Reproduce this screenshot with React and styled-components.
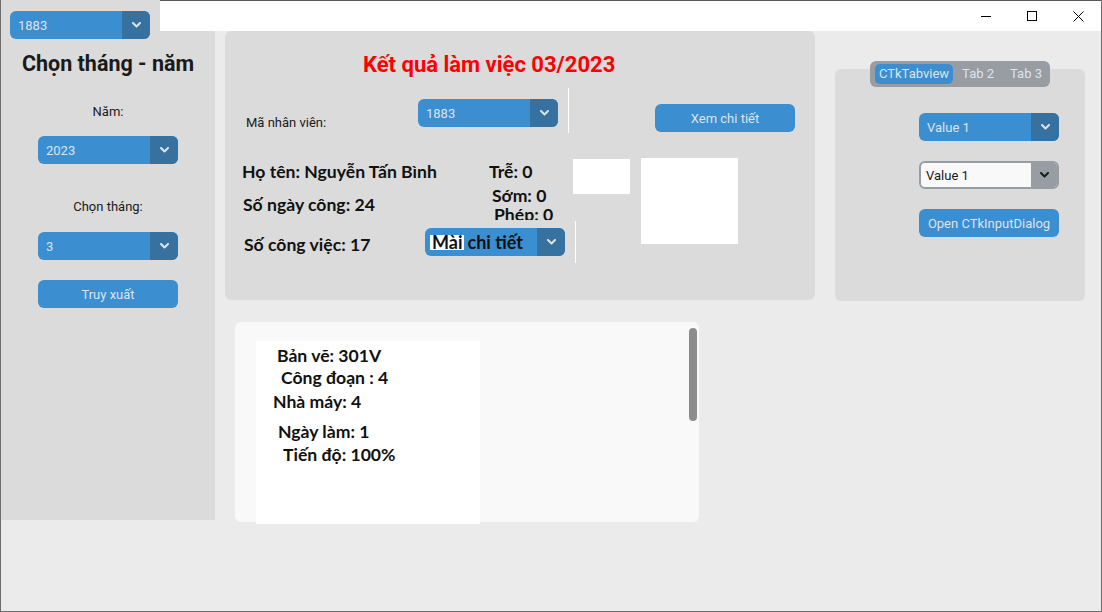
import React from 'react';
import styled, { createGlobalStyle } from 'styled-components';

const GlobalStyle = createGlobalStyle`
  html, body {
    margin: 0;
    padding: 0;
    overflow: hidden;
    background: #ebebeb;
  }
  * { box-sizing: border-box; }
`;

const Window = styled.div`
  position: relative;
  width: 1102px;
  height: 612px;
  background: #ebebeb;
  border: 1px solid #6e6e6e;
  border-top: none;
  display: flex;
  align-items: flex-start;
  font-family: Roboto, "Noto Sans", sans-serif;
  color: #1a1a1a;
`;

const TitleBar = styled.div`
  position: absolute;
  top: 0;
  left: 159px;
  right: 0;
  height: 31px;
  background: #ffffff;
  border-top: 1px solid #5a5a5a;
  display: flex;
  justify-content: flex-end;
  z-index: 2;
`;

const CaptionButton = styled.div`
  width: 46px;
  height: 30px;
  display: flex;
  align-items: center;
  justify-content: center;
`;

/* ---------- shared widgets ---------- */

const ComboFrame = styled.div`
  display: flex;
  width: 140px;
  height: 28px;
  border-radius: 6px;
  overflow: hidden;
  background: ${p => (p.$light ? '#f9f9fa' : '#3b8ed0')};
  border: ${p => (p.$light ? '2px solid #979da2' : 'none')};
  flex-shrink: 0;
`;

const ComboText = styled.div`
  flex: 1;
  display: flex;
  align-items: center;
  padding-left: ${p => (p.$light ? 5 : 8)}px;
  font-size: 13px;
  color: ${p => (p.$light ? '#1a1a1a' : '#dce4ee')};
  white-space: nowrap;
  overflow: hidden;
`;

const ComboArrow = styled.div`
  width: ${p => (p.$light ? 26 : 28)}px;
  background: ${p => (p.$light ? '#979da2' : '#36719f')};
  display: flex;
  align-items: center;
  justify-content: center;
`;

function Chevron({ color }) {
  return (
    <svg width="9" height="6" viewBox="0 0 9 6">
      <path d="M1 1 L4.5 4.5 L8 1" fill="none" stroke={color} strokeWidth="2" strokeLinecap="round" strokeLinejoin="round" />
    </svg>
  );
}

function Dropdown({ className, value, light, children }) {
  return (
    <ComboFrame className={className} $light={light}>
      <ComboText $light={light}>{children || value}</ComboText>
      <ComboArrow $light={light}>
        <Chevron color={light ? '#1a1a1a' : '#dce4ee'} />
      </ComboArrow>
    </ComboFrame>
  );
}

const Button = styled.div`
  width: 140px;
  height: 28px;
  border-radius: 6px;
  background: #3b8ed0;
  color: #dce4ee;
  font-size: 13px;
  display: flex;
  align-items: center;
  justify-content: center;
  flex-shrink: 0;
  margin-top: ${p => p.$mt || 0}px;
  margin-left: ${p => p.$ml || 0}px;
`;

const Divider = styled.div`
  width: 1px;
  height: ${p => p.$h}px;
  background: #ffffff;
  margin-left: ${p => p.$ml || 0}px;
  flex-shrink: 0;
`;

const Stat = styled.div`
  font-family: Lato, "Open Sans", sans-serif;
  font-weight: 700;
  font-size: 17.6px;
  line-height: 20px;
  color: #111;
  white-space: nowrap;
  margin-top: ${p => p.$mt || 0}px;
  margin-left: ${p => p.$ml || 0}px;
`;

/* ---------- left panel ---------- */

const LeftPanel = styled.div`
  width: 214px;
  height: 520px;
  background: #dbdbdb;
  display: flex;
  flex-direction: column;
  align-items: center;
  flex-shrink: 0;
`;

const TopCombo = styled(Dropdown)`
  align-self: flex-start;
  margin: 11px 0 0 9px;
`;

const SideTitle = styled.div`
  margin-top: 13px;
  font-size: 21.5px;
  font-weight: 700;
  line-height: 24px;
  color: #1a1a1a;
  white-space: nowrap;
`;

const SideLabel = styled.div`
  margin-top: ${p => p.$mt}px;
  font-size: 13px;
  line-height: 16px;
`;

const SideCombo = styled(Dropdown)`
  margin-top: ${p => p.$mt}px;
`;

/* ---------- main area ---------- */

const Main = styled.div`
  display: flex;
  flex-direction: column;
  padding-top: 31px;
`;

const TopRow = styled.div`
  display: flex;
  align-items: flex-start;
`;

const ResultPanel = styled.div`
  width: 590px;
  height: 269px;
  margin-left: 10px;
  background: #dbdbdb;
  border-radius: 6px;
  padding-top: 22px;
  display: flex;
  flex-direction: column;
`;

const PanelTitle = styled.div`
  padding-left: 138px;
  font-size: 22px;
  font-weight: 700;
  line-height: 24px;
  color: #ff0000;
  white-space: nowrap;
`;

const IdRow = styled.div`
  display: flex;
  align-items: flex-start;
  margin-top: 11px;
  padding-left: 21px;
`;

const FieldLabel = styled.div`
  width: 172px;
  margin-top: 27px;
  font-size: 13px;
  line-height: 16px;
`;

const IdCombo = styled(Dropdown)`
  margin-top: 11px;
`;

const StatsGrid = styled.div`
  display: grid;
  margin-top: 25px;
  padding-left: 17px;
  grid-template-columns: 183px 64px 84px 68px 97px;
  grid-template-rows: 63px 42px;
  grid-template-areas:
    "name name attend small big"
    "count menu menu line big";
`;

const NameBlock = styled.div`
  grid-area: name;
  padding-top: 4px;
`;

const AttendBlock = styled.div`
  grid-area: attend;
  height: 62px;
  overflow: hidden;
  padding-top: 4px;
`;

const Swatch = styled.div`
  grid-area: ${p => p.$area};
  width: ${p => p.$w}px;
  height: ${p => p.$h}px;
  margin-top: ${p => p.$mt || 0}px;
  background: #ffffff;
`;

const CountCell = styled.div`
  grid-area: count;
`;

const MenuCell = styled.div`
  grid-area: menu;
  padding-top: 7px;
`;

const LineCell = styled.div`
  grid-area: line;
`;

const MenuText = styled.span`
  font-family: Lato, "Open Sans", sans-serif;
  font-weight: 700;
  font-size: 18px;
  color: #111;
  margin-left: -3px;
`;

const Selected = styled.span`
  background: #ffffff;
  padding: 0 2px;
  margin-right: 3px;
  line-height: 15px;
  display: inline-block;
`;

/* ---------- right column ---------- */

const RightColumn = styled.div`
  width: 250px;
  margin: 30px 0 0 20px;
  display: flex;
  flex-direction: column;
`;

const TabBar = styled.div`
  align-self: center;
  position: relative;
  z-index: 1;
  display: flex;
  height: 26px;
  padding: 3px 1px 3px 5px;
  border-radius: 6px;
  background: #979da2;
`;

const Tab = styled.div`
  height: 20px;
  padding: 0 ${p => (p.$active ? 4 : 7)}px;
  margin-left: ${p => (p.$active ? 0 : 2)}px;
  border-radius: 5px;
  background: ${p => (p.$active ? '#3b8ed0' : 'transparent')};
  color: #dce4ee;
  font-size: 13px;
  line-height: 20px;
  white-space: nowrap;
`;

const TabPanel = styled.div`
  height: 232px;
  margin-top: -18px;
  border-radius: 6px;
  background: #dbdbdb;
  padding: 44px 0 0 84px;
  display: flex;
  flex-direction: column;
  gap: 20px;
`;

/* ---------- detail card ---------- */

const DetailCard = styled.div`
  position: relative;
  width: 464px;
  height: 200px;
  margin: 21px 0 0 20px;
  border-radius: 6px;
  background: #f9f9f9;
  padding: 19px 0 0 21px;
`;

const DetailSheet = styled.div`
  width: 224px;
  height: 183px;
  background: #ffffff;
  padding-top: 5px;
`;

const ScrollThumb = styled.div`
  position: absolute;
  top: 6px;
  right: 2px;
  width: 8px;
  height: 93px;
  border-radius: 4px;
  background: #8c8c8c;
`;

const details = [
  { text: 'Bản vẽ: 301V', ml: 21, mt: 0 },
  { text: 'Công đoạn : 4', ml: 25, mt: 2 },
  { text: 'Nhà máy: 4', ml: 17, mt: 4 },
  { text: 'Ngày làm: 1', ml: 22, mt: 10 },
  { text: 'Tiến độ: 100%', ml: 27, mt: 3 },
];

export default function App() {
  return (
    <>
      <GlobalStyle />
      <Window>
        <TitleBar>
          <CaptionButton>
            <svg width="10" height="10" viewBox="0 0 10 10">
              <path d="M0 5.5 H10" stroke="#000" strokeWidth="1" />
            </svg>
          </CaptionButton>
          <CaptionButton>
            <svg width="10" height="10" viewBox="0 0 10 10">
              <rect x="0.5" y="0.5" width="9" height="9" fill="none" stroke="#000" strokeWidth="1" />
            </svg>
          </CaptionButton>
          <CaptionButton>
            <svg width="11" height="11" viewBox="0 0 11 11">
              <path d="M0.5 0.5 L10.5 10.5 M10.5 0.5 L0.5 10.5" stroke="#000" strokeWidth="1" />
            </svg>
          </CaptionButton>
        </TitleBar>

        <LeftPanel>
          <TopCombo value="1883" />
          <SideTitle>Chọn tháng - năm</SideTitle>
          <SideLabel $mt={28}>Năm:</SideLabel>
          <SideCombo $mt={16} value="2023" />
          <SideLabel $mt={35}>Chọn tháng:</SideLabel>
          <SideCombo $mt={17} value="3" />
          <Button $mt={20}>Truy xuất</Button>
        </LeftPanel>

        <Main>
          <TopRow>
            <ResultPanel>
              <PanelTitle>Kết quả làm việc 03/2023</PanelTitle>
              <IdRow>
                <FieldLabel>Mã nhân viên:</FieldLabel>
                <IdCombo value="1883" />
                <Divider $h={45} $ml={10} />
                <Button $mt={16} $ml={86}>Xem chi tiết</Button>
              </IdRow>
              <StatsGrid>
                <NameBlock>
                  <Stat>Họ tên: Nguyễn Tấn Bình</Stat>
                  <Stat $mt={13} $ml={1}>Số ngày công: 24</Stat>
                </NameBlock>
                <AttendBlock>
                  <Stat>Trễ: 0</Stat>
                  <Stat $mt={4} $ml={3}>Sớm: 0</Stat>
                  <Stat $mt={-1} $ml={5}>Phép: 0</Stat>
                </AttendBlock>
                <Swatch $area="small" $w={57} $h={35} $mt={1} />
                <Swatch $area="big" $w={97} $h={86} />
                <CountCell>
                  <Stat $mt={14} $ml={2}>Số công việc: 17</Stat>
                </CountCell>
                <MenuCell>
                  <Dropdown>
                    <MenuText>
                      <Selected>Mài</Selected>chi tiết
                    </MenuText>
                  </Dropdown>
                </MenuCell>
                <LineCell>
                  <Divider $h={42} $ml={2} />
                </LineCell>
              </StatsGrid>
            </ResultPanel>

            <RightColumn>
              <TabBar>
                <Tab $active>CTkTabview</Tab>
                <Tab>Tab 2</Tab>
                <Tab>Tab 3</Tab>
              </TabBar>
              <TabPanel>
                <Dropdown value="Value 1" />
                <Dropdown value="Value 1" light />
                <Button>Open CTkInputDialog</Button>
              </TabPanel>
            </RightColumn>
          </TopRow>

          <DetailCard>
            <DetailSheet>
              {details.map(d => (
                <Stat key={d.text} $ml={d.ml} $mt={d.mt}>{d.text}</Stat>
              ))}
            </DetailSheet>
            <ScrollThumb />
          </DetailCard>
        </Main>
      </Window>
    </>
  );
}
